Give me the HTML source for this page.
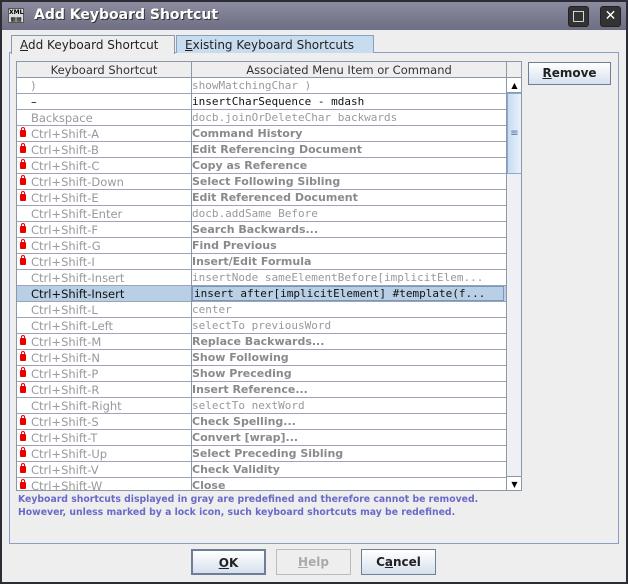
<!DOCTYPE html>
<html><head><meta charset="utf-8"><style>
*{box-sizing:border-box;margin:0;padding:0}
body{width:628px;height:584px;overflow:hidden;background:#4a4a52;font-family:"DejaVu Sans","Liberation Sans",sans-serif;font-size:11px;position:relative}
.win{position:absolute;left:0;top:0;width:628px;height:584px;background:#eeeeee;box-shadow:inset 0 0 0 2px #2c2c34}
.title{position:absolute;left:0;top:0;width:628px;height:30px;background:linear-gradient(#8c8ca0,#6e6e84);color:#fff;font-weight:bold;font-size:14px;border:2px solid #2c2c34;border-bottom:none}
.title .t{position:absolute;left:32px;top:5px;text-shadow:1px 1px #333}
.logo{position:absolute;left:6px;top:6px;width:16px;height:15px;background:#ddd;border:1px solid #555;font-size:6px;color:#000;line-height:7px;text-align:center}
.tb{position:absolute;top:4px;width:21px;height:21px;border:1px solid #222;border-radius:3px;background:#333;color:#fff;text-align:center;line-height:19px;font-size:14px}
.tab{position:absolute;top:35px;height:19px;border:1px solid #8a98b0;border-bottom:none;padding:2px 8px;font-size:12px;color:#222}
.panel{position:absolute;left:9px;top:52px;width:610px;height:492px;border:1px solid #8aa0c0}
.tbl{position:absolute;left:16px;top:61px;width:506px;height:430px;border:1px solid #8a98a8;background:#fff;overflow:hidden}
.hdr{position:absolute;left:0;top:0;height:16px;width:489px;background:#eee;border-bottom:1px solid #8a98a8;font-size:11.5px;color:#333}
.hdr div{position:absolute;top:1px;text-align:center}
.row{position:absolute;left:0;width:489px;height:16px;border-bottom:1px solid #9aa6b4}
.row .k{position:absolute;left:14px;top:1px;color:#999;font-size:11.5px;white-space:nowrap}
.row .c{position:absolute;left:175px;top:1px;color:#999;white-space:nowrap;width:312px;overflow:hidden}
.m{font-family:"DejaVu Sans Mono","Liberation Mono",monospace;font-size:11px}
.b{font-weight:bold;color:#8a8a8a!important;font-size:11px}
.blk{color:#111!important}
.lk{position:absolute;left:3px;top:4px;width:6px;height:7px;background:#e00;border-radius:1px}
.lk:before{content:"";position:absolute;left:1px;top:-3px;width:4px;height:4px;border:1px solid #e00;border-bottom:none;border-radius:2px 2px 0 0;box-sizing:border-box}
.vl{position:absolute;left:174px;top:0;width:1px;height:430px;background:#8a98a8}
.sb{position:absolute;left:489px;top:0;width:16px;height:430px;background:#eef0f4;border-left:1px solid #8a98a8}
.btn{position:absolute;height:26px;border:1px solid #6e7e96;background:linear-gradient(#fff,#d6e0ee);font-weight:bold;font-size:12px;text-align:center;line-height:24px;color:#222}
.note{position:absolute;left:18px;color:#6a6ac8;font-weight:bold;font-size:9.3px;white-space:nowrap}
</style></head><body>
<div class="win">
<div class="title"><div class="logo">XML<br>▦▦</div><span class="t">Add Keyboard Shortcut</span>
<div class="tb" style="left:566px">□</div><div class="tb" style="left:598px">✕</div></div>
<div class="panel"></div>
<div class="tab" style="left:11px;width:164px;background:#eee"><u>A</u>dd Keyboard Shortcut</div>
<div class="tab" style="left:176px;width:198px;background:#c8dcf0;border-color:#8aa0c0;height:18px"><u>E</u>xisting Keyboard Shortcuts</div>
<div class="tbl">
<div class="hdr"><div style="left:0;width:174px">Keyboard Shortcut</div><div style="left:175px;width:314px">Associated Menu Item or Command</div></div>
<div class="row" style="top:16px"><span class="k">)</span><span class="c m">showMatchingChar )</span></div>
<div class="row" style="top:32px"><span class="k blk">–</span><span class="c m blk">insertCharSequence - mdash</span></div>
<div class="row" style="top:48px"><span class="k">Backspace</span><span class="c m">docb.joinOrDeleteChar backwards</span></div>
<div class="row" style="top:64px"><i class="lk"></i><span class="k">Ctrl+Shift-A</span><span class="c b">Command History</span></div>
<div class="row" style="top:80px"><i class="lk"></i><span class="k">Ctrl+Shift-B</span><span class="c b">Edit Referencing Document</span></div>
<div class="row" style="top:96px"><i class="lk"></i><span class="k">Ctrl+Shift-C</span><span class="c b">Copy as Reference</span></div>
<div class="row" style="top:112px"><i class="lk"></i><span class="k">Ctrl+Shift-Down</span><span class="c b">Select Following Sibling</span></div>
<div class="row" style="top:128px"><i class="lk"></i><span class="k">Ctrl+Shift-E</span><span class="c b">Edit Referenced Document</span></div>
<div class="row" style="top:144px"><span class="k">Ctrl+Shift-Enter</span><span class="c m">docb.addSame Before</span></div>
<div class="row" style="top:160px"><i class="lk"></i><span class="k">Ctrl+Shift-F</span><span class="c b">Search Backwards...</span></div>
<div class="row" style="top:176px"><i class="lk"></i><span class="k">Ctrl+Shift-G</span><span class="c b">Find Previous</span></div>
<div class="row" style="top:192px"><i class="lk"></i><span class="k">Ctrl+Shift-I</span><span class="c b">Insert/Edit Formula</span></div>
<div class="row" style="top:208px"><span class="k">Ctrl+Shift-Insert</span><span class="c m">insertNode sameElementBefore[implicitElem...</span></div>
<div class="row" style="top:224px;background:#b8cfe5"><span class="k blk">Ctrl+Shift-Insert</span><span class="c m blk" style="border:1px solid #7a96c0;top:0;height:15px;left:175px;padding-left:1px">insert after[implicitElement] #template(f...</span></div>
<div class="row" style="top:240px"><span class="k">Ctrl+Shift-L</span><span class="c m">center</span></div>
<div class="row" style="top:256px"><span class="k">Ctrl+Shift-Left</span><span class="c m">selectTo previousWord</span></div>
<div class="row" style="top:272px"><i class="lk"></i><span class="k">Ctrl+Shift-M</span><span class="c b">Replace Backwards...</span></div>
<div class="row" style="top:288px"><i class="lk"></i><span class="k">Ctrl+Shift-N</span><span class="c b">Show Following</span></div>
<div class="row" style="top:304px"><i class="lk"></i><span class="k">Ctrl+Shift-P</span><span class="c b">Show Preceding</span></div>
<div class="row" style="top:320px"><i class="lk"></i><span class="k">Ctrl+Shift-R</span><span class="c b">Insert Reference...</span></div>
<div class="row" style="top:336px"><span class="k">Ctrl+Shift-Right</span><span class="c m">selectTo nextWord</span></div>
<div class="row" style="top:352px"><i class="lk"></i><span class="k">Ctrl+Shift-S</span><span class="c b">Check Spelling...</span></div>
<div class="row" style="top:368px"><i class="lk"></i><span class="k">Ctrl+Shift-T</span><span class="c b">Convert [wrap]...</span></div>
<div class="row" style="top:384px"><i class="lk"></i><span class="k">Ctrl+Shift-Up</span><span class="c b">Select Preceding Sibling</span></div>
<div class="row" style="top:400px"><i class="lk"></i><span class="k">Ctrl+Shift-V</span><span class="c b">Check Validity</span></div>
<div class="row" style="top:416px"><i class="lk"></i><span class="k">Ctrl+Shift-W</span><span class="c b">Close</span></div>
<div class="vl"></div>
<div class="sb">
<div style="position:absolute;left:0;top:0;width:15px;height:16px;background:#eee;border-bottom:1px solid #8a98a8"></div>
<div style="position:absolute;left:0;top:16px;width:15px;height:15px;background:#fff;border-bottom:1px solid #8a98a8;font-size:8px;text-align:center;line-height:15px">▲</div>
<div style="position:absolute;left:0;top:31px;width:15px;height:81px;background:linear-gradient(90deg,#c8dcf0,#eaf2fb);border:1px solid #8aa8d0;color:#5070b0;text-align:center;line-height:80px;font-size:10px">≡</div>
<div style="position:absolute;left:0;top:414px;width:15px;height:15px;background:#fff;border-top:1px solid #8a98a8;font-size:8px;text-align:center;line-height:15px">▼</div>
</div>
</div>
<div class="btn" style="left:528px;top:62px;width:83px;height:23px;line-height:21px"><u>R</u>emove</div>
<div class="note" style="top:494px">Keyboard shortcuts displayed in gray are predefined and therefore cannot be removed.</div>
<div class="note" style="top:507px">However, unless marked by a lock icon, such keyboard shortcuts may be redefined.</div>
<div class="btn" style="left:191px;top:549px;width:75px;border:2px solid #6e7e96"><u>O</u>K</div>
<div class="btn" style="left:276px;top:549px;width:75px;background:#eee;color:#aaa;border-color:#bbb"><u>H</u>elp</div>
<div class="btn" style="left:361px;top:549px;width:75px">C<u>a</u>ncel</div>
</div>
</body></html>
